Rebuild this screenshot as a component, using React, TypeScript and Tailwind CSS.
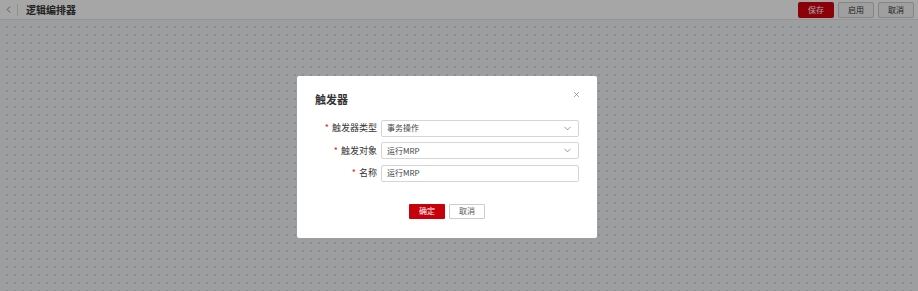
import { ChevronLeft, ChevronDown, X } from "lucide-react";

const font = { fontFamily: '"Noto Sans CJK SC", "Liberation Sans", sans-serif' };

function FormRow({ label, value, select }: { label: string; value: string; select?: boolean }) {
  return (
    <div className="flex items-center h-[17px]">
      <div className="w-[84px] pr-[4px] flex justify-end items-center text-[9px] text-[#333]">
        <span className="text-[#e02020] mr-[3px]">*</span>
        {label}
      </div>
      <div className="w-[198px] h-[17px] border border-[#d5d5d5] rounded-[2px] bg-white flex items-center justify-between px-[5px]">
        <span className="text-[8px] text-[#444]">{value}</span>
        {select && <ChevronDown size={11} strokeWidth={1.4} className="text-[#666]" />}
      </div>
    </div>
  );
}

export default function App() {
  return (
    <div className="relative w-[918px] h-[291px] overflow-hidden bg-[#f2f3f5]" style={font}>
      <div className="h-[20px] bg-white border-b border-[#e5e5e5] flex items-center pl-[3px] pr-[4px]">
        <ChevronLeft size={11} strokeWidth={1.5} className="text-[#555]" />
        <div className="w-px h-[12px] bg-[#ddd] ml-[3px] mr-[8px]" />
        <span className="text-[10px] font-bold text-[#333]">逻辑编排器</span>
        <div className="ml-auto flex gap-[4px]">
          <button className="w-[36px] h-[16px] rounded-[2px] bg-[#d6000f] text-white text-[8px]">保存</button>
          <button className="w-[36px] h-[16px] rounded-[2px] border border-[#ccc] bg-[#f4f4f4] text-[#333] text-[8px]">启用</button>
          <button className="w-[36px] h-[16px] rounded-[2px] border border-[#ccc] bg-[#f4f4f4] text-[#333] text-[8px]">取消</button>
        </div>
      </div>
      <div className="h-[271px] bg-[radial-gradient(#d9dadd_1px,transparent_1.2px)] bg-[size:8px_8px] bg-[position:3px_3px]" />

      <div className="absolute inset-0 bg-black/35 flex items-center justify-center">
        <div className="w-[300px] h-[162px] bg-white rounded-[2px] relative mt-[22px] mr-[24px] pt-[16px]">
          <div className="pl-[18px] text-[11px] font-bold text-[#333] leading-[14px]">触发器</div>
          <X size={9} strokeWidth={1.5} className="absolute right-[16px] top-[14px] text-[#666]" />
          <div className="mt-[14px] flex flex-col gap-[5.5px]">
            <FormRow label="触发器类型" value="事务操作" select />
            <FormRow label="触发对象" value="运行MRP" select />
            <FormRow label="名称" value="运行MRP" />
          </div>
          <div className="mt-[22px] flex justify-center gap-[4px]">
            <button className="w-[36px] h-[15px] rounded-[1px] bg-[#c7000b] text-white text-[8px]">确定</button>
            <button className="w-[36px] h-[15px] rounded-[1px] border border-[#ccc] bg-white text-[#555] text-[8px]">取消</button>
          </div>
        </div>
      </div>
    </div>
  );
}
